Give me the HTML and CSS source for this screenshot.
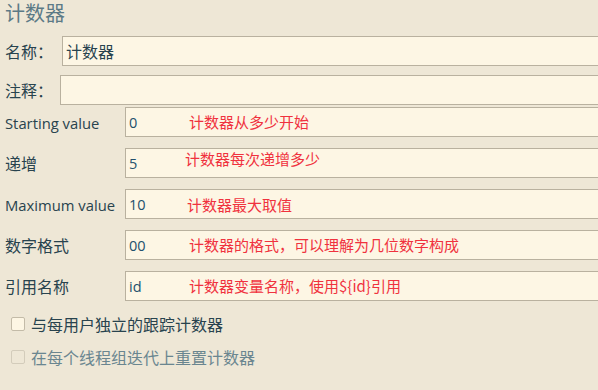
FILE: index.html
```html
<!DOCTYPE html>
<html lang="zh">
<head>
<meta charset="utf-8">
<link rel="stylesheet" href="styles.css">
</head>
<body>
<div class="panel">
  <div class="title">计数器</div>
  <div class="row row-name">
    <div class="label label-short">名称：</div>
    <div class="field field-name"><span class="value cjk">计数器</span></div>
  </div>
  <div class="row row-comment">
    <div class="label label-short2">注释：</div>
    <div class="field field-comment"></div>
  </div>
  <div class="row row-start">
    <div class="label label-wide latin">Starting value</div>
    <div class="field"><span class="value">0</span><span class="note">计数器从多少开始</span></div>
  </div>
  <div class="row row-gap">
    <div class="label label-wide">递增</div>
    <div class="field"><span class="value">5</span><span class="note note-l2">计数器每次递增多少</span></div>
  </div>
  <div class="row row-gap">
    <div class="label label-wide latin">Maximum value</div>
    <div class="field"><span class="value">10</span><span class="note note-l1">计数器最大取值</span></div>
  </div>
  <div class="row row-gap">
    <div class="label label-wide">数字格式</div>
    <div class="field"><span class="value">00</span><span class="note">计数器的格式，可以理解为几位数字构成</span></div>
  </div>
  <div class="row row-gap">
    <div class="label label-wide">引用名称</div>
    <div class="field"><span class="value">id</span><span class="note">计数器变量名称，使用${id}引用</span></div>
  </div>
  <label class="check check-first"><span class="box"></span><span class="check-text">与每用户独立的跟踪计数器</span></label>
  <label class="check check-disabled"><span class="box"></span><span class="check-text">在每个线程组迭代上重置计数器</span></label>
</div>
</body>
</html>
```
FILE: styles.css
```css
html, body {
  margin: 0;
  padding: 0;
  background: #eee7d6;
  overflow: hidden;
}
body {
  width: 598px;
  height: 390px;
  font-family: "Noto Sans CJK SC", "Noto Sans", sans-serif;
  color: #28434e;
}
.panel {
  display: flex;
  flex-direction: column;
  padding-left: 5px;
}
.title {
  height: 30px;
  margin-bottom: 6px;
  font-size: 20px;
  line-height: 26px;
  color: #5c7a86;
}
.row {
  display: flex;
  align-items: center;
  height: 30px;
}
.row-comment { margin-top: 9px; }
.row-start { margin-top: 2px; }
.row-gap { margin-top: 11px; }
.label {
  font-size: 16px;
  flex: none;
}
.latin {
  font-family: "Open Sans", "Noto Sans", sans-serif;
  font-size: 14.8px;
  padding-top: 1px;
}
.label-short { width: 57px; }
.label-short2 { width: 55px; }
.label-wide { width: 120px; }
.field {
  position: relative;
  flex: 1;
  height: 28px;
  margin-right: -10px;
  background: #fdf6e4;
  border: 1px solid #b9b19f;
  display: flex;
  align-items: center;
  padding-left: 3px;
}
.value {
  font-family: "Open Sans", "Noto Sans", sans-serif;
  font-size: 14.5px;
  color: #22506c;
}
.value.cjk {
  font-family: "Noto Sans CJK SC", sans-serif;
  font-size: 16px;
  color: #28434e;
}
.note {
  position: absolute;
  left: 63px;
  top: 4px;
  font-family: "Noto Sans CJK SC", sans-serif;
  font-size: 15px;
  line-height: 20px;
  color: #f0323e;
  white-space: nowrap;
}
.note-l2 { left: 59px; top: 0; }
.note-l1 { left: 61px; top: 5px; }
.check {
  display: flex;
  align-items: center;
  height: 20px;
  padding-left: 6px;
  font-size: 16px;
}
.check-first { margin-top: 13px; }
.check-disabled {
  margin-top: 13px;
  color: #6a8690;
}
.box {
  width: 12px;
  height: 12px;
  border: 1px solid #c3bba8;
  border-radius: 2px;
  background: #fdf6e4;
  margin-right: 6px;
}
.check-disabled .box {
  background: #eee7d6;
  border-color: #d3ccbb;
}
```
